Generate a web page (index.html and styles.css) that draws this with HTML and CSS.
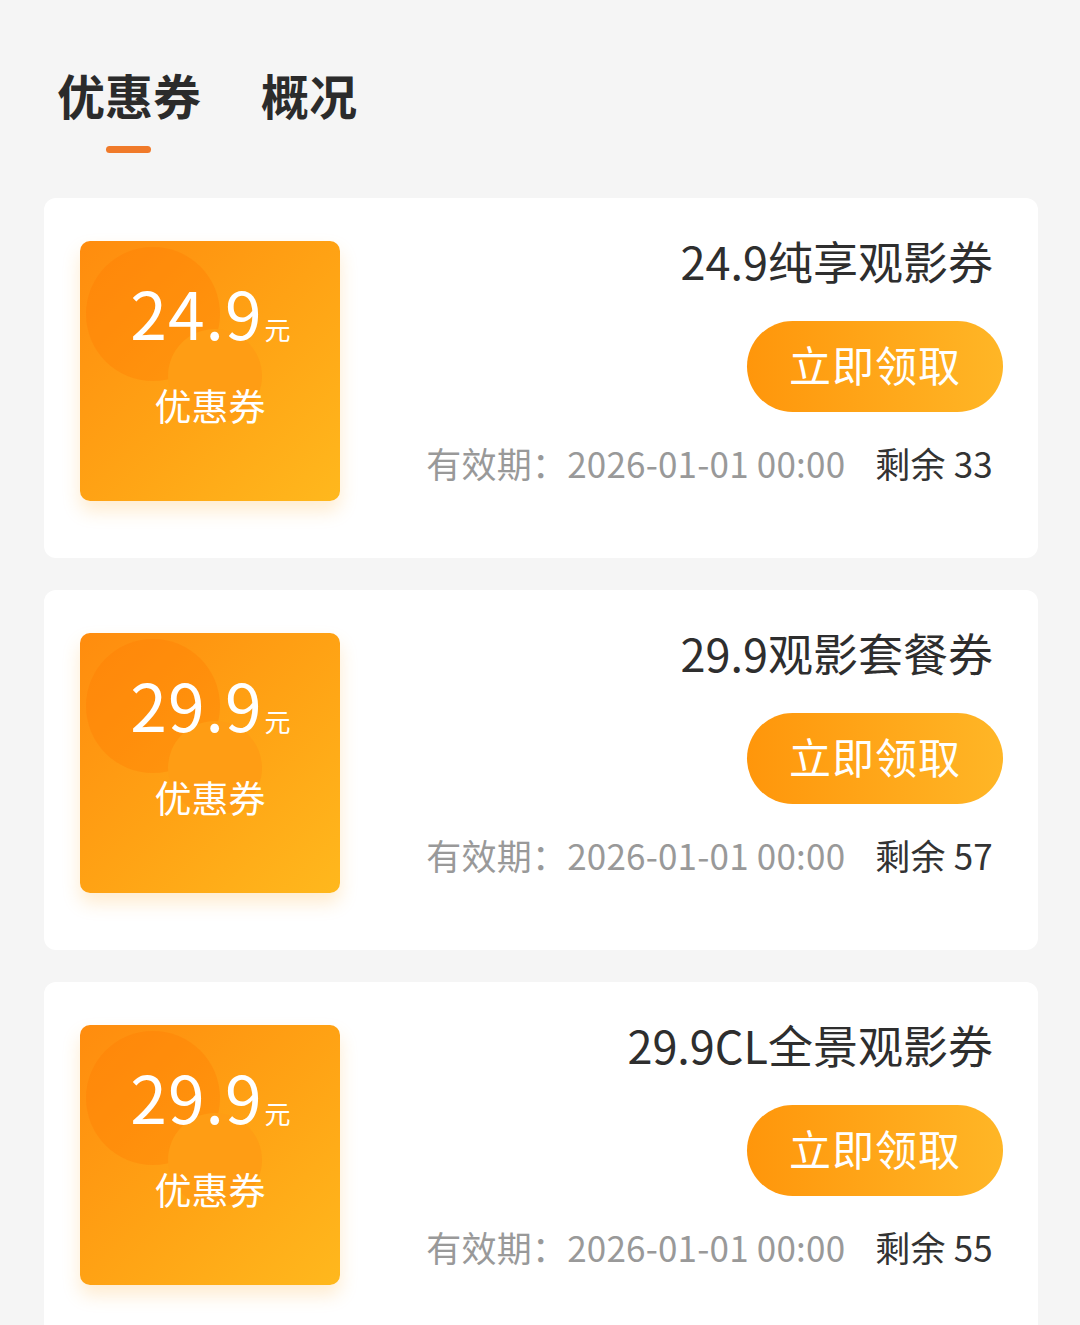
FILE: index.html
```html
<!DOCTYPE html>
<html lang="zh-CN">
<head>
    <meta charset="UTF-8">
    <meta name="viewport" content="width=device-width, initial-scale=1.0">
    <title>优惠券</title>
    <link rel="stylesheet" href="styles.css">
</head>
<body>
    <div class="tabs">
        <div class="tab active">优惠券<span class="tab-line"></span></div>
        <div class="tab">概况</div>
    </div>

    <div class="list">
        <div class="card">
            <div class="coupon">
                <span class="circle circle-a"></span>
                <span class="circle circle-b"></span>
                <div class="amount">24.9<small>元</small></div>
                <div class="coupon-label">优惠券</div>
            </div>
            <div class="info">
                <div class="title">24.9纯享观影券</div>
                <button class="get-btn">立即领取</button>
                <div class="meta">
                    <span class="expire">有效期：2026-01-01 00:00</span>
                    <span class="stock">剩余 33</span>
                </div>
            </div>
        </div>

        <div class="card">
            <div class="coupon">
                <span class="circle circle-a"></span>
                <span class="circle circle-b"></span>
                <div class="amount">29.9<small>元</small></div>
                <div class="coupon-label">优惠券</div>
            </div>
            <div class="info">
                <div class="title">29.9观影套餐券</div>
                <button class="get-btn">立即领取</button>
                <div class="meta">
                    <span class="expire">有效期：2026-01-01 00:00</span>
                    <span class="stock">剩余 57</span>
                </div>
            </div>
        </div>

        <div class="card">
            <div class="coupon">
                <span class="circle circle-a"></span>
                <span class="circle circle-b"></span>
                <div class="amount">29.9<small>元</small></div>
                <div class="coupon-label">优惠券</div>
            </div>
            <div class="info">
                <div class="title">29.9CL全景观影券</div>
                <button class="get-btn">立即领取</button>
                <div class="meta">
                    <span class="expire">有效期：2026-01-01 00:00</span>
                    <span class="stock">剩余 55</span>
                </div>
            </div>
        </div>
    </div>
</body>
</html>
```

FILE: styles.css
```css
body {
    margin: 0;
    background-color: #f5f5f5;
    font-family: "Noto Sans CJK SC", "Noto Sans", sans-serif;
    color: #333;
    overflow: hidden;
}

.tabs {
    display: flex;
    gap: 60px;
    padding: 62px 0 0 57px;
    height: 136px;
    box-sizing: border-box;
}

.tab {
    position: relative;
    font-size: 48px;
    font-weight: bold;
    line-height: 64px;
    color: #2b2b2b;
}

.tab-line {
    position: absolute;
    left: 50%;
    top: 84px;
    width: 45px;
    height: 7px;
    margin-left: -23px;
    border-radius: 4px;
    background-color: #f07a2a;
}

.list {
    display: flex;
    flex-direction: column;
    gap: 32px;
    padding: 62px 42px 0 44px;
}

.card {
    display: flex;
    justify-content: space-between;
    height: 360px;
    box-sizing: border-box;
    padding: 43px 45px 0 36px;
    background-color: #fff;
    border-radius: 12px;
}

.coupon {
    position: relative;
    overflow: hidden;
    width: 260px;
    height: 260px;
    border-radius: 10px;
    background: linear-gradient(135deg, #ff8c0e 0%, #ffa214 50%, #ffb81d 100%);
    box-shadow: 0 10px 18px rgba(255, 170, 40, 0.22);
    color: #fff;
    text-align: center;
}

.circle {
    position: absolute;
    border-radius: 50%;
}

.circle-a {
    left: 6px;
    top: 6px;
    width: 134px;
    height: 134px;
    background-color: rgba(255, 120, 0, 0.3);
}

.circle-b {
    left: 88px;
    top: 88px;
    width: 94px;
    height: 94px;
    background-color: #ff9d14;
}

.amount {
    position: relative;
    margin-top: 35px;
    font-size: 66px;
    line-height: 70px;
    letter-spacing: 1px;
    padding-left: 2px;
}

.amount small {
    font-size: 26px;
    margin-left: 2px;
}

.coupon-label {
    position: relative;
    margin-top: 17px;
    font-size: 37px;
    line-height: 48px;
}

.info {
    display: flex;
    flex-direction: column;
    align-items: flex-end;
}

.title {
    font-size: 45px;
    line-height: 52px;
    margin-top: -6px;
    color: #2e2e2e;
}

.get-btn {
    width: 256px;
    height: 91px;
    margin-top: 34px;
    margin-right: -10px;
    padding-bottom: 8px;
    border: none;
    border-radius: 46px;
    background: linear-gradient(90deg, #ff960b, #ffb626);
    color: #fff;
    font-family: inherit;
    font-size: 42px;
    letter-spacing: 1px;
}

.meta {
    margin-top: 28px;
    font-size: 35px;
    line-height: 46px;
    display: flex;
    gap: 30px;
    letter-spacing: 0.2px;
}

.expire {
    color: #999;
}

.stock {
    color: #333;
}
```
